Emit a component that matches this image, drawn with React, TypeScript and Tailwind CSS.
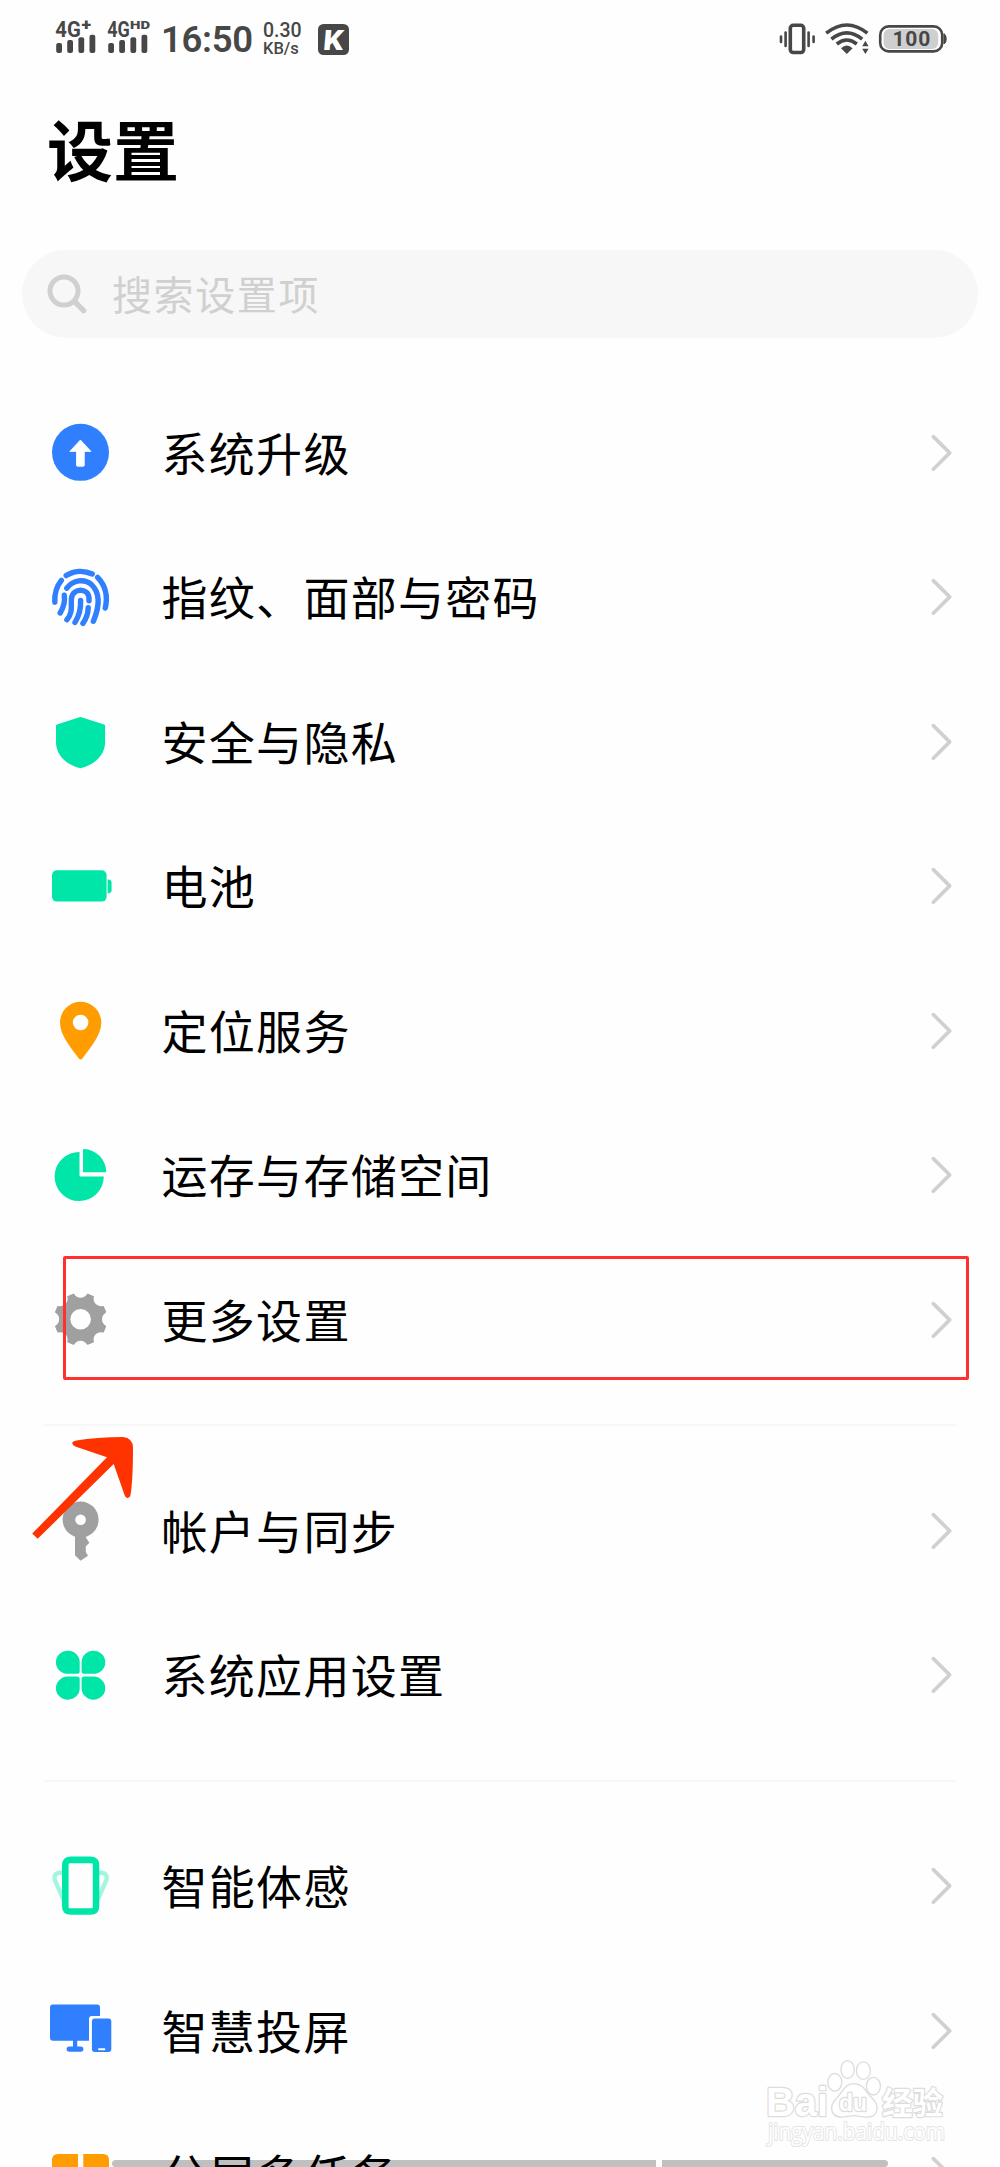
import React from "react";

const BLUE = "#2f7fff";
const GREEN = "#00e6a8";
const ORANGE = "#ff9c00";
const GRAY = "#a0a0a0";
const STATUS = "#474747";

const IconBox = ({ children }: { children: React.ReactNode }) => (
  <svg width="65" height="65" viewBox="0 0 65 65" fill="none" className="shrink-0">
    {children}
  </svg>
);

const UpgradeIcon = () => (
  <IconBox>
    <circle cx="32.5" cy="32.3" r="28.5" fill={BLUE} />
    <path
      d="M32.4 20 43 31.4H36.3V45.2Q36.3 46.3 35.2 46.3H29.6Q28.5 46.3 28.5 45.2V31.4H21.8Z"
      fill="#fff"
      stroke="#fff"
      strokeWidth="0.8"
      strokeLinejoin="round"
    />
  </IconBox>
);

const FingerprintIcon = () => (
  <IconBox>
    <g stroke={BLUE} strokeWidth="5.4" strokeLinecap="round">
      <path d="M18.2 10.6C26 5.6 36 5.2 44.2 9" />
      <path d="M13.4 15.4C8 22 6.4 29 6.8 37.2" />
      <path d="M49.6 12.4C57 20 60 31 57.3 43" />
      <path d="M18.8 23.2C25 14.6 36.5 13.4 43.5 19.6C52.5 28 51.3 42 45.4 56.2" />
      <path d="M16.3 30.2C17.2 37 15.5 42.5 12.2 48" />
      <path d="M18.9 54.8C25.5 47 22.6 40 23.5 33C25.2 22.6 40.2 22.6 41 33V35.8" />
      <path d="M32.6 35.5C33 44 31 51 27 57.4" />
      <path d="M40.2 42.8C40 48.5 38 54 34.9 58.4" />
    </g>
  </IconBox>
);

const ShieldIcon = () => (
  <IconBox>
    <path
      d="M31.4 8.2Q32.4 7.8 33.4 8.2L56.1 15.6Q57.1 16 57.1 17V33C57.1 47 46 55.5 33.4 59Q32.4 59.3 31.4 59C19 55.5 8 47 8 33V17Q8 16 9 15.6Z"
      fill={GREEN}
    />
  </IconBox>
);

const BatteryIcon = () => (
  <IconBox>
    <rect x="4" y="16.2" width="54.6" height="31.4" rx="5" fill={GREEN} />
    <path d="M59.6 25.6H61Q63.6 26 63.6 28.6V36Q63.6 38.8 61 39.2H59.6Z" fill={GREEN} />
  </IconBox>
);

const PinIcon = () => (
  <IconBox>
    <path
      fillRule="evenodd"
      d="M32.6 3.7C44 3.7 53.3 13 53.3 24.6C53.3 37 43 49 34.4 60.4Q32.6 62.4 30.8 60.4C22.2 49 12 37 12 24.6C12 13 21.2 3.7 32.6 3.7ZM32.6 16.7a7.8 7.8 0 1 0 0 15.6a7.8 7.8 0 1 0 0-15.6Z"
      fill={ORANGE}
    />
  </IconBox>
);

const StorageIcon = () => (
  <IconBox>
    <path d="M31.5 8.9A24.6 24.6 0 1 0 55.8 33.6H32.5Q31.5 33.6 31.5 32.6Z" fill={GREEN} />
    <path d="M35 6.9Q35 6 36 6A23.4 23.4 0 0 1 58.3 28.3Q58.3 29.3 57.3 29.3H35Z" fill={GREEN} />
  </IconBox>
);

const polar = (deg: number, r: number) => {
  const a = (deg * Math.PI) / 180;
  return `${(32.6 + r * Math.cos(a)).toFixed(2)} ${(32.2 + r * Math.sin(a)).toFixed(2)}`;
};

const gearPath =
  [0, 45, 90, 135, 180, 225, 270, 315]
    .map(
      (a, i) =>
        `${i === 0 ? "M" : "L"}${polar(a - 16, 25.8)}C${polar(a - 11, 19.6)} ${polar(a + 11, 19.6)} ${polar(a + 16, 25.8)}`
    )
    .join("") + "Z";

const GearIcon = () => (
  <IconBox>
    <path d={gearPath} fill={GRAY} stroke={GRAY} strokeWidth="1.6" strokeLinejoin="round" />
    <circle cx="32.6" cy="32.2" r="10.3" fill="#fff" />
  </IconBox>
);

const KeyIcon = () => (
  <IconBox>
    <circle cx="32.6" cy="21.6" r="18" fill={GRAY} />
    <circle cx="32.6" cy="21.8" r="5.3" fill="#fff" />
    <path d="M27 37H38V39.8L41.4 44.8 37.8 48.2V54L40 57.8 32.6 62.8 27 57.2Z" fill={GRAY} />
  </IconBox>
);

const CloverIcon = () => (
  <IconBox>
    <g fill={GREEN}>
      <path d="M19.8 7.7A11.8 11.6 0 0 1 31.7 19.2V28.2Q31.7 30.8 29.1 30.8H19.8A11.8 11.5 0 0 1 19.8 7.7Z" />
      <path d="M45.4 7.7A11.8 11.6 0 0 0 33.6 19.2V28.2Q33.6 30.8 36.2 30.8H45.4A11.8 11.5 0 0 0 45.4 7.7Z" />
      <path d="M19.8 56.7A11.8 11.6 0 0 0 31.7 45.2V36.2Q31.7 33.6 29.1 33.6H19.8A11.8 11.5 0 0 0 19.8 56.7Z" />
      <path d="M45.4 56.7A11.8 11.6 0 0 1 33.6 45.2V36.2Q33.6 33.6 36.2 33.6H45.4A11.8 11.5 0 0 1 45.4 56.7Z" />
    </g>
  </IconBox>
);

const MotionIcon = () => (
  <IconBox>
    <g stroke="#a2f5de" strokeWidth="4.4">
      <path d="M15 18.8H11.5Q5.4 19.6 6.7 25.5L15.5 46" />
      <path d="M50.2 18.8H53.7Q59.8 19.6 58.5 25.5L49.7 46" />
    </g>
    <path
      fillRule="evenodd"
      d="M23 2.5H42.3Q51.3 2.5 51.3 11.5V52Q51.3 60.8 42.3 60.8H23Q14 60.8 14 52V11.5Q14 2.5 23 2.5ZM21.6 9.2Q20.6 9.2 20.6 10.2V53.2Q20.6 54.2 21.6 54.2H43.8Q44.8 54.2 44.8 53.2V10.2Q44.8 9.2 43.8 9.2Z"
      fill={GREEN}
    />
  </IconBox>
);

const CastIcon = () => (
  <IconBox>
    <rect x="2" y="6.6" width="50" height="36.2" rx="3" fill={BLUE} />
    <rect x="25" y="42" width="4.2" height="8" fill={BLUE} />
    <rect x="18.6" y="48.4" width="16.8" height="5.4" rx="2.7" fill={BLUE} />
    <path d="M41 44V21Q41 18 44 18H53V44Z" fill="#fff" />
    <rect x="43.9" y="20.6" width="19.4" height="33.4" rx="3" fill={BLUE} />
    <rect x="50" y="50.3" width="7.4" height="2" rx="1" fill="#fff" />
  </IconBox>
);

const SplitIcon = () => (
  <IconBox>
    <path d="M10 11H30V60H4V17Q4 11 10 11Z" fill={ORANGE} />
    <path d="M35.3 11H55Q61 11 61 17V60H35.3Z" fill={ORANGE} />
  </IconBox>
);

const groups = [
  [
    { label: "系统升级", Icon: UpgradeIcon },
    { label: "指纹、面部与密码", Icon: FingerprintIcon },
    { label: "安全与隐私", Icon: ShieldIcon },
    { label: "电池", Icon: BatteryIcon },
    { label: "定位服务", Icon: PinIcon },
    { label: "运存与存储空间", Icon: StorageIcon },
    { label: "更多设置", Icon: GearIcon },
  ],
  [
    { label: "帐户与同步", Icon: KeyIcon },
    { label: "系统应用设置", Icon: CloverIcon },
  ],
  [
    { label: "智能体感", Icon: MotionIcon },
    { label: "智慧投屏", Icon: CastIcon },
    { label: "分屏多任务", Icon: SplitIcon },
  ],
];

type SignalProps = { suffix: string; size: number; x: number; y: number; width: number; gWidth: number };

const Signal = ({ suffix, size, x, y, width, gWidth }: SignalProps) => (
  <svg width="52" height="40" viewBox="0 0 52 40" fill={STATUS} className="shrink-0" fontFamily="Roboto, sans-serif">
    <text x="0.3" y="21.5" fontSize="22" fontWeight="700" textLength={gWidth} lengthAdjust="spacingAndGlyphs">
      4G
    </text>
    <text x={x} y={y} fontSize={size} fontWeight="900" textLength={width} lengthAdjust="spacingAndGlyphs">
      {suffix}
    </text>
    {/* the bars carry a thin outline that keeps them clear of the letters */}
    <g stroke="#fff" strokeWidth="1.4" paintOrder="stroke">
      <rect x="1.2" y="28" width="5.8" height="10" rx="2" />
      <rect x="12.2" y="25" width="5.8" height="13" rx="2" />
      <rect x="23.4" y="22.3" width="5.8" height="15.7" rx="2" />
      <rect x="34.5" y="19.7" width="5.8" height="18.3" rx="2" />
    </g>
  </svg>
);

const StatusBar = () => (
  <div className="flex h-20 items-start justify-between pt-[15px] pr-[54px] pl-[55px] font-[Roboto,sans-serif] text-[#474747]">
    <div className="flex items-start">
      <Signal suffix="+" size={17} x={26.4} y={15} width={9.6} gWidth={25.5} />
      <Signal suffix="HD" size={11.5} x={23} y={14} width={20} gWidth={22.6} />
      <span className="ml-0.5 w-[102px] text-[36.5px] leading-[50px] font-semibold tracking-[-0.3px]">16:50</span>
      <div className="flex w-[55px] flex-col pt-[6px] font-medium">
        <span className="text-[19.5px] leading-[19px]">0.30</span>
        <span className="text-[16.5px] leading-[17px]">KB/s</span>
      </div>
      <svg width="31" height="31" viewBox="0 0 31 31" className="mt-[9px]">
        <rect width="31" height="31" rx="5.5" fill={STATUS} />
        <text
          x="5.5"
          y="25.6"
          fill="#fff"
          fontSize="28"
          fontWeight="900"
          fontFamily="Roboto, sans-serif"
          textLength="20"
          lengthAdjust="spacingAndGlyphs"
          transform="skewX(-5) translate(1.2 0)"
        >
          K
        </text>
      </svg>
    </div>
    <svg width="170" height="40" viewBox="0 0 170 40" fill="none" stroke={STATUS} className="-mr-px">
      <rect x="13.3" y="10.3" width="13.4" height="27.2" rx="3" strokeWidth="3.6" />
      <g strokeWidth="2.6" strokeLinecap="round">
        <path d="M4 21.6V27M8.6 17.6V31M31.6 17.6V31M36.6 21.6V27" />
      </g>
      <g strokeWidth="3.6">
        <path d="M49.2 18.2Q69.8 1.8 90.4 18.2" />
        <path d="M54.4 24.2Q69.8 11.6 85.2 24.2" />
        <path d="M59.8 29Q69.8 21 79.8 29" />
      </g>
      <path d="M64 33.2Q69.8 28 75.6 33.2L69.8 39Z" fill={STATUS} stroke="none" />
      <path d="M85.2 31.2 88.4 25.8 91.6 31.2ZM85.2 33.8 88.4 39 91.6 33.8Z" fill={STATUS} stroke="none" />
      <rect x="103.2" y="11.4" width="62" height="25" rx="8.5" strokeWidth="2.6" />
      <rect x="106.6" y="14" width="54.6" height="20" rx="6" fill="#cfcfcf" stroke="none" />
      <path d="M167 18.6Q169.2 20 169.2 24T167 29Z" fill={STATUS} strokeWidth="1" />
      <text
        x="115.4"
        y="31.2"
        fill={STATUS}
        stroke="none"
        fontSize="21"
        fontWeight="700"
        fontFamily="Roboto, sans-serif"
        textLength="38"
        lengthAdjust="spacing"
      >
        100
      </text>
    </svg>
  </div>
);

const Chevron = () => (
  <svg width="24" height="40" viewBox="0 0 24 40" fill="none" className="shrink-0">
    <path
      d="M3.3 3.6 19.7 19.9 3.3 36.2"
      stroke="#d0d0d0"
      strokeWidth="3.6"
      strokeLinecap="round"
      strokeLinejoin="round"
    />
  </svg>
);

const RedArrow = () => (
  <svg className="absolute top-[1435px] left-[30px]" width="106" height="106" viewBox="0 0 106 106">
    <path
      d="M2.2 98.6 77 22.3 46 11.8Q42.3 10 42.3 8T46.5 5.4Q66 2.2 93 2Q103 3 103 13Q103 44 100.6 59.6Q100 62.9 97.7 62.9T94.2 59L83.7 29 7.7 103.8Z"
      fill="#ff3300"
    />
  </svg>
);

const Watermark = () => (
  <svg
    className="absolute top-[2055px] left-[760px]"
    width="195"
    height="98"
    viewBox="0 0 195 98"
    fill="#fff"
    stroke="#dcdcdc"
    strokeWidth="1.3"
    strokeLinejoin="round"
  >
    <g strokeWidth="2.4" paintOrder="stroke" fontWeight="700">
      <text x="6" y="61" fontSize="41" fontFamily="Liberation Sans, sans-serif" textLength="62" lengthAdjust="spacingAndGlyphs">
        Bai
      </text>
      <text x="122" y="58.5" fontSize="31" fontFamily="Noto Sans CJK SC, sans-serif" textLength="61" lengthAdjust="spacingAndGlyphs">
        经验
      </text>
    </g>
    <ellipse cx="74.8" cy="27.3" rx="7" ry="8.8" />
    <ellipse cx="87.6" cy="14.6" rx="6.6" ry="9" />
    <ellipse cx="103.4" cy="15.6" rx="7" ry="8.8" />
    <ellipse cx="113.4" cy="31.2" rx="7" ry="8.8" />
    <path d="M94 28.6C104 28.6 106 38 112 43C121 52 117 62 108 62C102 62.5 99 60.6 94 60.6S85 62.5 80 62C70.5 61 69 51 76 44C82.5 38 84 28.6 94 28.6Z" />
    <text
      x="79"
      y="56"
      fontSize="24"
      fontFamily="Liberation Sans, sans-serif"
      fontWeight="700"
      strokeWidth="2.4"
      paintOrder="stroke"
      textLength="28"
      lengthAdjust="spacingAndGlyphs"
    >
      du
    </text>
    <text
      x="8"
      y="84.5"
      fontSize="23"
      fontFamily="Open Sans, sans-serif"
      strokeWidth="2"
      stroke="#e4e4e4"
      paintOrder="stroke"
      textLength="177"
      lengthAdjust="spacingAndGlyphs"
    >
      jingyan.baidu.com
    </text>
  </svg>
);

export default function App() {
  return (
    <div className="relative h-[2167px] w-[1000px] overflow-hidden bg-[#fefefe] font-['Noto_Sans_CJK_SC',sans-serif] text-black">
      <StatusBar />

      <h1 className="mt-[17px] ml-[47px] text-[66px] leading-[100px] font-bold">设置</h1>

      {/* Search field */}
      <div className="mx-[22px] mt-[53px] flex h-[88px] items-center rounded-full bg-[#f7f7f7] pl-[25px]">
        <svg width="40" height="40" viewBox="0 0 40 40" fill="none" stroke="#d0d0d0">
          <circle cx="17" cy="17" r="14" strokeWidth="5" />
          <path d="M27.5 27.5 36.6 36.6" strokeWidth="5.4" strokeLinecap="round" />
        </svg>
        <span className="ml-[25px] pb-0.5 text-[40px] leading-[60px] tracking-[1.6px] text-[#d0d0d0]">搜索设置项</span>
      </div>

      {/* Scroll bar lying under the last row */}
      <div className="absolute top-[2160px] left-[112px] flex h-[7px] w-[776px] gap-1.5">
        <div className="w-[544px] rounded-l-full bg-[#c0c0c0]" />
        <div className="flex-1 rounded-r-full bg-[#c0c0c0]" />
      </div>

      <div className="relative mt-[42.5px]">
        {groups.map((group, i) => (
          <div key={i}>
            {i > 0 && <div className="mx-[44px] mt-[32px] mb-[32.5px] h-0.5 bg-[#f7f7f7]" />}
            {group.map(({ label, Icon }) => (
              <div key={label} className="flex h-[144.5px] items-center pr-[46px] pl-12">
                <Icon />
                <span className="ml-[48.5px] flex-1 pb-1 text-[46px] leading-[68px] tracking-[1.3px]">{label}</span>
                <Chevron />
              </div>
            ))}
          </div>
        ))}
      </div>

      {/* Annotations */}
      <div className="absolute top-[1256px] left-[63px] h-[124px] w-[906px] rounded-[2px] border-[3px] border-[#ff3030]" />
      <RedArrow />
      <Watermark />
    </div>
  );
}
